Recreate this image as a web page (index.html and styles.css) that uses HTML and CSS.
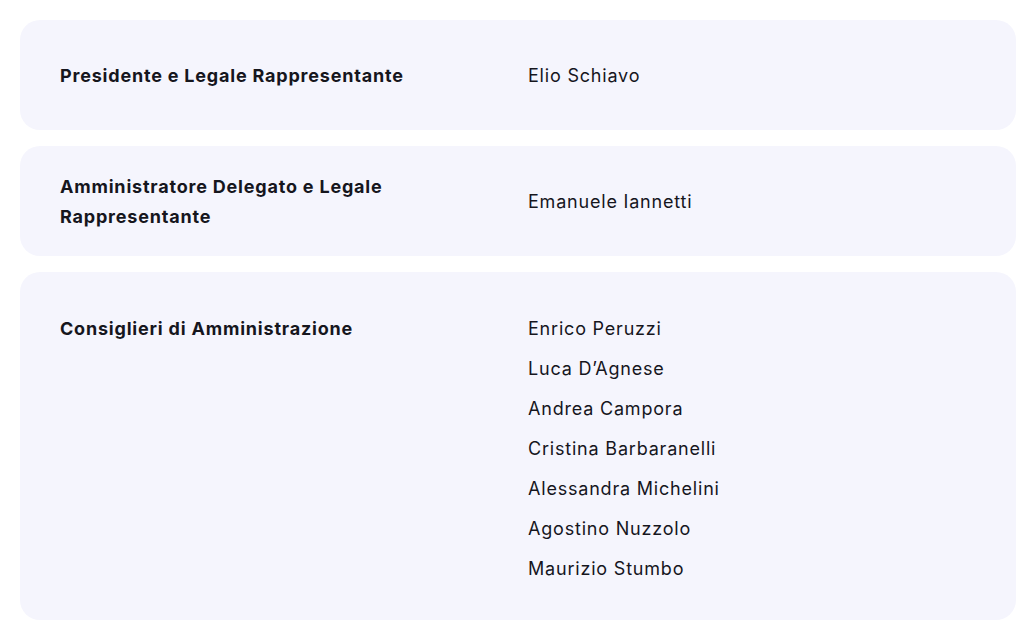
FILE: index.html
```html
<!DOCTYPE html>
<html lang="it">
<head>
<meta charset="utf-8">
<title>Organi sociali</title>
<link rel="stylesheet" href="styles.css">
</head>
<body>
<main class="board">
  <section class="card">
    <div class="role">Presidente e Legale Rappresentante</div>
    <ul class="names"><li>Elio Schiavo</li></ul>
  </section>
  <section class="card">
    <div class="role">Amministratore Delegato e Legale Rappresentante</div>
    <ul class="names"><li>Emanuele Iannetti</li></ul>
  </section>
  <section class="card card--list">
    <div class="role">Consiglieri di Amministrazione</div>
    <ul class="names">
      <li>Enrico Peruzzi</li>
      <li>Luca D’Agnese</li>
      <li>Andrea Campora</li>
      <li>Cristina Barbaranelli</li>
      <li>Alessandra Michelini</li>
      <li>Agostino Nuzzolo</li>
      <li>Maurizio Stumbo</li>
    </ul>
  </section>
</main>
</body>
</html>
```

FILE: styles.css
```css
* { box-sizing: border-box; }
html, body { margin: 0; padding: 0; background: #ffffff; }
body {
  font-family: Inter, "Noto Sans", sans-serif;
  color: #16161d;
  font-size: 18px;
  line-height: 30px;
  letter-spacing: 0.8px;
}
.board {
  padding: 20px;
  display: flex;
  flex-direction: column;
  gap: 16px;
}
.card {
  background: #f5f5fd;
  border-radius: 20px;
  min-height: 110px;
  padding: 26px 40px 24px;
  display: grid;
  grid-template-columns: 1fr 1fr;
  column-gap: 20px;
  align-items: center;
}
.card--list {
  align-items: start;
  padding: 42px 40px 36px;
}
.role {
  font-weight: 700;
}
.names {
  list-style: none;
  margin: 0;
  padding: 0;
  display: flex;
  flex-direction: column;
  gap: 10px;
}
```
